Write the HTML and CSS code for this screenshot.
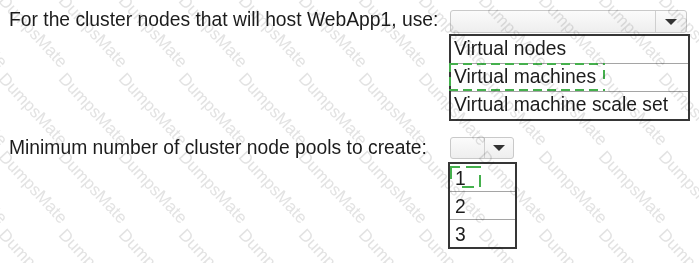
FILE: index.html
```html
<!DOCTYPE html>
<html>
<head>
<meta charset="utf-8">
<link rel="stylesheet" href="styles.css">
</head>
<body>
<div class="form">
  <div class="label">For the cluster nodes that will host WebApp1, use:</div>
  <div class="control">
    <div class="select wide"><span class="field"></span><span class="btn"><span class="tri"></span></span></div>
    <ul class="list wide-list">
      <li>Virtual nodes</li>
      <li class="marked">Virtual machines
        <svg class="dash dash-wide" width="156" height="28" viewBox="0 0 156 28">
          <g stroke="#45b04d" stroke-width="2" fill="none">
            <line x1="0" y1="1" x2="156" y2="1" stroke-dasharray="9 5"/>
            <line x1="0" y1="27" x2="156" y2="27" stroke-dasharray="9 5"/>
            <line x1="1" y1="0" x2="1" y2="28" stroke-dasharray="9 5"/>
            <line x1="155" y1="7" x2="155" y2="16"/>
          </g>
        </svg>
      </li>
      <li>Virtual machine scale set</li>
    </ul>
  </div>
  <div class="label second">Minimum number of cluster node pools to create:</div>
  <div class="control second">
    <div class="select narrow"><span class="field"></span><span class="btn"><span class="tri"></span></span></div>
    <ul class="list narrow-list">
      <li class="marked">1
        <svg class="dash dash-narrow" width="32" height="22" viewBox="0 0 32 22">
          <g stroke="#45b04d" stroke-width="2" fill="none">
            <line x1="0" y1="1" x2="10" y2="1"/>
            <line x1="16" y1="1" x2="31" y2="1"/>
            <line x1="1" y1="0" x2="1" y2="13"/>
            <line x1="30" y1="9" x2="30" y2="21"/>
            <line x1="12" y1="21" x2="24" y2="21"/>
          </g>
        </svg>
      </li>
      <li>2</li>
      <li>3</li>
    </ul>
  </div>
</div>
<div class="watermark-clip" aria-hidden="true">
  <div class="watermark">
    <span>DumpsMate</span><span>DumpsMate</span><span>DumpsMate</span><span>DumpsMate</span><span>DumpsMate</span><span>DumpsMate</span><span>DumpsMate</span><span>DumpsMate</span><span>DumpsMate</span><span>DumpsMate</span><span>DumpsMate</span><span>DumpsMate</span><span>DumpsMate</span>
    <span>DumpsMate</span><span>DumpsMate</span><span>DumpsMate</span><span>DumpsMate</span><span>DumpsMate</span><span>DumpsMate</span><span>DumpsMate</span><span>DumpsMate</span><span>DumpsMate</span><span>DumpsMate</span><span>DumpsMate</span><span>DumpsMate</span><span>DumpsMate</span>
    <span>DumpsMate</span><span>DumpsMate</span><span>DumpsMate</span><span>DumpsMate</span><span>DumpsMate</span><span>DumpsMate</span><span>DumpsMate</span><span>DumpsMate</span><span>DumpsMate</span><span>DumpsMate</span><span>DumpsMate</span><span>DumpsMate</span><span>DumpsMate</span>
    <span>DumpsMate</span><span>DumpsMate</span><span>DumpsMate</span><span>DumpsMate</span><span>DumpsMate</span><span>DumpsMate</span><span>DumpsMate</span><span>DumpsMate</span><span>DumpsMate</span><span>DumpsMate</span><span>DumpsMate</span><span>DumpsMate</span><span>DumpsMate</span>
  </div>
</div>
</body>
</html>
```
FILE: styles.css
```css
html, body {
  margin: 0;
  padding: 0;
  height: 100%;
  background: #ffffff;
}
body {
  position: relative;
  overflow: hidden;
  font-family: "Liberation Sans", Arial, sans-serif;
  color: #1c1c1c;
}
.form {
  display: grid;
  grid-template-columns: 441px auto;
  row-gap: 15px;
  padding: 8px 0 0 9px;
  align-items: start;
}
.label {
  font-size: 19.3px;
  line-height: 23px;
  white-space: nowrap;
}
.control {
  padding-top: 2px;
}
.control.second {
  padding-top: 1px;
}
.select {
  display: flex;
  box-sizing: border-box;
  border: 1px solid #c9c9c9;
  border-radius: 3px;
  background: linear-gradient(#fbfbfb, #eeeeee);
}
.select.wide {
  width: 237px;
  height: 23px;
}
.select.narrow {
  width: 64px;
  height: 22px;
}
.field {
  flex: 1;
}
.btn {
  display: flex;
  align-items: center;
  justify-content: center;
  border-left: 1px solid #cfcfcf;
}
.wide .btn {
  width: 30px;
}
.narrow .btn {
  width: 28px;
}
.tri {
  width: 0;
  height: 0;
  border-left: 6px solid transparent;
  border-right: 6px solid transparent;
  border-top: 6px solid #333333;
}
.list {
  list-style: none;
  margin: 1px 0 0 -1px;
  padding: 0;
  border: 2px solid #363636;
  font-size: 19.3px;
}
.wide-list {
  width: 237px;
}
.narrow-list {
  width: 65px;
  margin-top: 3px;
  margin-left: -2px;
}
.list li {
  position: relative;
  box-sizing: border-box;
  height: 27px;
  line-height: 24px;
  padding: 1px 0 0 3px;
  white-space: nowrap;
}
.narrow-list li {
  padding: 3px 0 0 5px;
}
.list li + li {
  border-top: 1px solid #a5a5a5;
  height: 28px;
}
.dash {
  position: absolute;
  display: block;
}
.dash-wide {
  left: -2px;
  top: -1px;
}
.dash-narrow {
  left: 0;
  top: 2px;
}
.watermark-clip {
  position: absolute;
  left: 0;
  top: 0;
  width: 100%;
  height: 100%;
  overflow: hidden;
  mix-blend-mode: multiply;
  pointer-events: none;
}
.watermark {
  display: grid;
  grid-template-columns: repeat(13, 60px);
  grid-auto-rows: 78px;
  margin: -8px 0 0 -52px;
}
.watermark span {
  display: block;
  font-family: "Liberation Sans", Arial, sans-serif;
  font-size: 17px;
  line-height: 17px;
  color: #e3e3e3;
  white-space: nowrap;
  transform-origin: 0 0;
  transform: rotate(47deg);
}
```
